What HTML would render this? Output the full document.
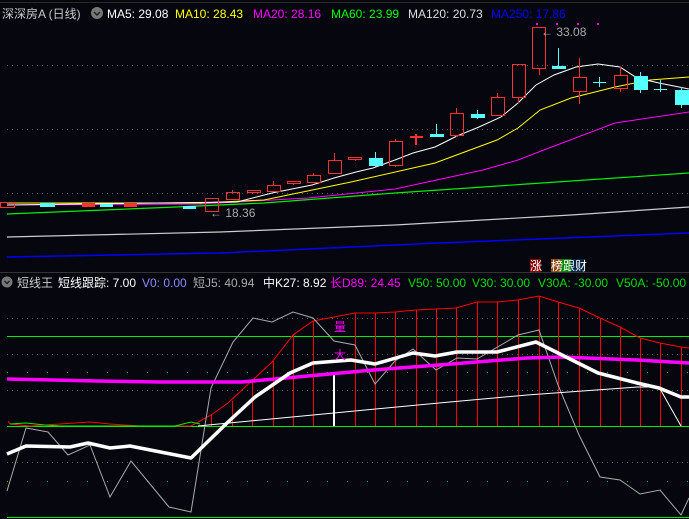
<!DOCTYPE html>
<html><head><meta charset="utf-8"><style>
html,body{margin:0;padding:0;background:#06060e;width:689px;height:519px;overflow:hidden}
svg{display:block}
text{font-family:"Liberation Sans","Noto Sans CJK SC",sans-serif;font-size:12px}
</style></head><body>
<svg width="689" height="519" viewBox="0 0 689 519" xmlns="http://www.w3.org/2000/svg">
<rect width="689" height="519" fill="#06060e"/>
<line x1="0" y1="2.5" x2="689" y2="2.5" stroke="#2a2a2a"/>
<g stroke="#555" stroke-dasharray="1,4">
<line x1="7" y1="65.5" x2="689" y2="65.5"/><line x1="7" y1="129.5" x2="689" y2="129.5"/><line x1="7" y1="193.5" x2="689" y2="193.5"/>
<line x1="7" y1="318.5" x2="689" y2="318.5"/><line x1="7" y1="354.5" x2="689" y2="354.5"/><line x1="7" y1="390.5" x2="689" y2="390.5"/><line x1="7" y1="462.5" x2="689" y2="462.5"/>
</g>
<g stroke="#0c0" stroke-dasharray="1,19"><line x1="7" y1="372.5" x2="689" y2="372.5"/><line x1="7" y1="481.5" x2="689" y2="481.5"/></g>
<text x="2" y="18" fill="#c8c8c8">深深房A (日线)</text>
<circle cx="97" cy="13" r="6" fill="#777"/><path d="M94 12l3 3 3-3" stroke="#222" stroke-width="1.5" fill="none"/>
<text x="107" y="18" fill="#fff">MA5: 29.08</text>
<text x="175" y="18" fill="#ff0">MA10: 28.43</text>
<text x="253" y="18" fill="#f0f">MA20: 28.16</text>
<text x="331" y="18" fill="#0f0">MA60: 23.99</text>
<text x="408" y="18" fill="#ddd">MA120: 20.73</text>
<text x="491" y="18" fill="#00f">MA250: 17.86</text>
<polyline fill="none" stroke="#0000ff" stroke-width="1.5" points="7,257 220,253 439,243 689,233"/>
<polyline fill="none" stroke="#ccc" stroke-width="1.2" points="7,237 220,232 395,225 571,215 689,207"/>
<polyline fill="none" stroke="#0e0" stroke-width="1.2" points="7,214 176,207 264,203 395,193 527,184 689,173"/>
<polyline fill="none" stroke="#f0f" stroke-width="1" points="7,205 200,204 308,198 395,189 483,170 518,160 549,148 615,123 689,112"/>
<polyline fill="none" stroke="#ff0" stroke-width="1" points="7,203 200,203 264,200 351,182 435,163 497,140 518,128 540,110 571,98 615,87 650,80 689,77"/>
<polyline fill="none" stroke="#fff" stroke-width="1" points="7,205 237,202 272,193 312,185 334,178 356,172 373,168 395,160 413,153 435,147 457,136 479,127 501,117 518,103 536,85 554,75 576,67 598,64 620,67 637,78 659,83 689,89"/>
<g stroke="#ff3030" fill="none" stroke-width="1" shape-rendering="crispEdges">
<rect x="0.5" y="202.5" width="14" height="5"/><rect x="82.5" y="203.5" width="12" height="3" fill="#ff3030"/><rect x="124.5" y="203.5" width="12" height="3" fill="#ff3030"/>
<rect x="205.5" y="198.5" width="13" height="13"/>
<rect x="226.5" y="192.5" width="13" height="7"/><line x1="232.5" y1="190" x2="232.5" y2="192"/>
<rect x="247.5" y="190.5" width="13" height="2"/>
<rect x="267.5" y="185.5" width="13" height="6"/><line x1="273.5" y1="181" x2="273.5" y2="185"/>
<rect x="287.5" y="181.5" width="13" height="2"/><line x1="293.5" y1="183" x2="293.5" y2="185"/>
<rect x="307.5" y="175.5" width="13" height="7"/><line x1="313.5" y1="173" x2="313.5" y2="175"/>
<rect x="328.5" y="160.5" width="13" height="13"/><line x1="334.5" y1="153" x2="334.5" y2="160"/>
<rect x="348.5" y="157.5" width="13" height="2"/><line x1="355.5" y1="159" x2="355.5" y2="161"/>
<rect x="389.5" y="141.5" width="13" height="24"/><line x1="395.5" y1="139" x2="395.5" y2="141"/><line x1="395.5" y1="165" x2="395.5" y2="167"/>
<rect x="410" y="136" width="13" height="2" fill="#ff3030" stroke="none"/><rect x="415" y="134" width="2" height="11" fill="#ff3030" stroke="none"/>
<rect x="450.5" y="113.5" width="13" height="22"/><line x1="456.5" y1="108" x2="456.5" y2="113"/><line x1="456.5" y1="135" x2="456.5" y2="137"/>
<rect x="491.5" y="97.5" width="13" height="18"/><line x1="497.5" y1="93" x2="497.5" y2="97"/>
<rect x="512.5" y="64.5" width="13" height="33"/><line x1="518.5" y1="97" x2="518.5" y2="103"/>
<rect x="532.5" y="27.5" width="13" height="41"/><line x1="539.5" y1="68" x2="539.5" y2="75"/>
<rect x="573.5" y="77.5" width="13" height="14"/><line x1="579.5" y1="58" x2="579.5" y2="77"/><line x1="579.5" y1="91" x2="579.5" y2="104"/>
<rect x="614.5" y="75.5" width="13" height="13"/><line x1="620.5" y1="67" x2="620.5" y2="75"/><line x1="620.5" y1="88" x2="620.5" y2="92"/>
</g>
<g stroke="#5ff" fill="#5ff" stroke-width="1" shape-rendering="crispEdges">
<rect x="40.5" y="203.5" width="14" height="3"/><rect x="100.5" y="204.5" width="12" height="2"/><rect x="183.5" y="206.5" width="12" height="2"/>
<rect x="369.5" y="158.5" width="13" height="7"/><line x1="375.5" y1="152" x2="375.5" y2="167"/>
<rect x="430.5" y="134.5" width="13" height="2"/><line x1="436.5" y1="124" x2="436.5" y2="137"/>
<rect x="471.5" y="114.5" width="13" height="3"/><line x1="477.5" y1="110" x2="477.5" y2="119"/>
<rect x="552.5" y="66.5" width="13" height="2"/><line x1="558.5" y1="48" x2="558.5" y2="67"/>
<line x1="593" y1="82.5" x2="606" y2="82.5"/><line x1="599.5" y1="77" x2="599.5" y2="87"/>
<rect x="634.5" y="76.5" width="13" height="13"/><line x1="640.5" y1="72" x2="640.5" y2="93"/>
<line x1="654" y1="89.5" x2="667" y2="89.5"/><line x1="660.5" y1="80" x2="660.5" y2="92"/>
<rect x="675.5" y="90.5" width="14" height="14"/><line x1="681.5" y1="87" x2="681.5" y2="108"/>
</g>
<g fill="#f0f"><rect x="536" y="23" width="2" height="2"/><rect x="556" y="23" width="2" height="2"/><rect x="577" y="23" width="2" height="2"/><rect x="597" y="23" width="2" height="2"/></g>
<text x="541" y="36" fill="#aaa">← 33.08</text>
<text x="210" y="217" fill="#aaa">← 18.36</text>
<rect x="530" y="259" width="11" height="13" fill="#800"/><text x="530" y="270" fill="#fff" font-size="11">涨</text>
<rect x="551" y="259" width="10" height="13" fill="#8b4a10"/><rect x="561" y="259" width="10" height="13" fill="#080"/><rect x="571" y="259" width="13" height="13" fill="#024"/>
<text x="551" y="270" fill="#fff" font-size="11">榜跟财</text>
<line x1="0" y1="272.5" x2="689" y2="272.5" stroke="#333"/>
<circle cx="7" cy="282" r="5.5" fill="#777"/><path d="M4.5 281l2.5 2.5 2.5-2.5" stroke="#222" stroke-width="1.5" fill="none"/>
<text x="17" y="287" fill="#ccc">短线王</text>
<text x="58" y="287" fill="#fff">短线跟踪: 7.00</text>
<text x="142" y="287" fill="#8a8aff">V0: 0.00</text>
<text x="193" y="287" fill="#aaa">短J5: 40.94</text>
<text x="263" y="287" fill="#fff">中K27: 8.92</text>
<text x="330" y="287" fill="#f0f">长D89: 24.45</text>
<text x="408" y="287" fill="#0d0">V50: 50.00</text>
<text x="472" y="287" fill="#0d0">V30: 30.00</text>
<text x="538" y="287" fill="#0d0">V30A: -30.00</text>
<text x="616" y="287" fill="#0d0">V50A: -50.00</text>
<g stroke="#0e0" stroke-width="1" shape-rendering="crispEdges"><line x1="7" y1="336.5" x2="689" y2="336.5"/><line x1="7" y1="426.5" x2="689" y2="426.5"/><line x1="7" y1="517.5" x2="689" y2="517.5"/></g>
<g stroke="#f00" stroke-width="1" shape-rendering="crispEdges">
<line x1="211.5" y1="426" x2="211.5" y2="415"/><line x1="232.5" y1="426" x2="232.5" y2="401"/><line x1="252.5" y1="426" x2="252.5" y2="380"/><line x1="273.5" y1="426" x2="273.5" y2="361"/><line x1="293.5" y1="426" x2="293.5" y2="335"/><line x1="313.5" y1="426" x2="313.5" y2="321"/>
<line x1="355.5" y1="426" x2="355.5" y2="313"/><line x1="375.5" y1="426" x2="375.5" y2="313"/><line x1="395.5" y1="426" x2="395.5" y2="312"/><line x1="416.5" y1="426" x2="416.5" y2="310"/><line x1="436.5" y1="426" x2="436.5" y2="309"/><line x1="456.5" y1="426" x2="456.5" y2="308"/><line x1="477.5" y1="426" x2="477.5" y2="302"/><line x1="497.5" y1="426" x2="497.5" y2="302"/><line x1="518.5" y1="426" x2="518.5" y2="300"/><line x1="539.5" y1="426" x2="539.5" y2="296"/><line x1="558.5" y1="426" x2="558.5" y2="302"/><line x1="579.5" y1="426" x2="579.5" y2="308"/><line x1="600.5" y1="426" x2="600.5" y2="318"/><line x1="620.5" y1="426" x2="620.5" y2="327"/><line x1="640.5" y1="426" x2="640.5" y2="338"/><line x1="660.5" y1="426" x2="660.5" y2="343"/><line x1="681.5" y1="426" x2="681.5" y2="347"/>
</g>
<line x1="334" y1="426" x2="334" y2="372" stroke="#fff" stroke-width="2"/>
<polyline fill="none" stroke="#f00" stroke-width="1" points="8,421 10,424 30,426 60,424 90,422 110,424 140,426 191,426 211,415 228,403 272,362 293,335 313,321 334,317 355,313 375,313 395,312 416,310 436,309 456,308 477,302 497,302 518,300 539,296 558,302 579,308 600,318 620,327 640,338 660,343 681,347 689,348"/>
<polyline fill="none" stroke="#0e0" stroke-width="1" points="10,424 26,423 45,425 60,426 175,426 191,422 200,424"/>
<polyline fill="none" stroke="#aaa" stroke-width="1" points="7,491 26,428 48,432 68,455 90,445 110,497 131,461 169,507 191,512 211,388 233,342 253,318 272,322 293,312 313,318 334,341 355,345 375,384 395,361 413,349 436,370 457,358 477,359 518,335 539,330 558,385 579,435 600,477 620,480 640,494 660,490 681,515 689,498"/>
<polyline fill="none" stroke="#fff" stroke-width="1" points="198,426 334,413 439,403 527,395 637,387 659,387 681,426"/>
<polyline fill="none" stroke="#f0f" stroke-width="3.5" points="7,379 97,381 160,382 242,382 286,378 373,370 439,365 527,358 562,357 637,360 689,363"/>
<polyline fill="none" stroke="#fff" stroke-width="3.5" stroke-linejoin="round" points="7,454 26,446 70,447 88,443 110,448 130,446 191,458 228,422 255,397 290,373 313,363 351,360 375,364 413,353 435,356 457,352 497,352 536,342 562,355 598,373 637,383 659,388 681,397 689,397"/>
<text x="334" y="331" fill="#f0f" font-size="12">量</text>
<text x="334" y="359" fill="#f0f" font-size="12">大</text>
</svg>
</body></html>
